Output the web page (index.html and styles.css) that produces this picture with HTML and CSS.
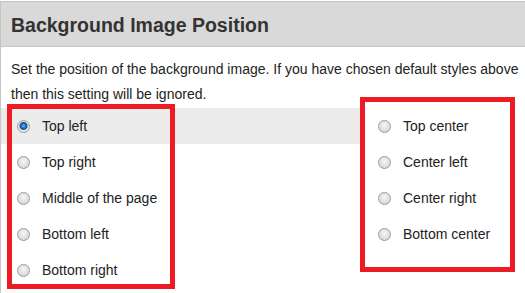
FILE: index.html
```html
<!DOCTYPE html>
<html lang="en">
<head>
  <meta charset="UTF-8" />
  <title>Background Image Position</title>
  <link rel="stylesheet" href="styles.css">
</head>
<body>
  <div class="panel">
    <div class="panel-head">
      <h2>Background Image Position</h2>
    </div>
    <p class="intro">Set the position of the background image. If you have chosen default styles above then this setting will be ignored.</p>

    <div class="options">
      <div class="col col-left">
        <label class="opt active"><input type="radio" name="bgpos" checked> Top left</label>
        <label class="opt"><input type="radio" name="bgpos"> Top right</label>
        <label class="opt"><input type="radio" name="bgpos"> Middle of the page</label>
        <label class="opt"><input type="radio" name="bgpos"> Bottom left</label>
        <label class="opt"><input type="radio" name="bgpos"> Bottom right</label>
      </div>
      <div class="col col-right">
        <label class="opt"><input type="radio" name="bgpos"> Top center</label>
        <label class="opt"><input type="radio" name="bgpos"> Center left</label>
        <label class="opt"><input type="radio" name="bgpos"> Center right</label>
        <label class="opt"><input type="radio" name="bgpos"> Bottom center</label>
      </div>
    </div>
  </div>

  <!-- annotation boxes -->
  <div class="mark mark-left"></div>
  <div class="mark mark-right"></div>
</body>
</html>
```

FILE: styles.css
```css
html, body {
  margin: 0;
  overflow: hidden;
}
body {
  font-family: 'Liberation Sans', Arial, sans-serif;
  color: #222;
  background: #fff;
  position: relative;
  height: 293px;
}
.panel {
  width: 620px;
  margin-top: 1px;
  border-top: 1px solid #c4c4c4;
  border-left: 1px solid #c4c4c4;
  height: 300px;
}
.panel-head {
  height: 44px;
  background: #d9d9d9;
  border-bottom: 1px solid #c6c6c6;
  display: flex;
  align-items: center;
  padding-left: 10px;
}
.panel-head h2 {
  margin: 0;
  font-size: 19.5px;
  font-weight: bold;
  color: #333;
  padding-top: 2px;
}
.intro {
  margin: 10px 0 0;
  padding: 0 10px;
  font-size: 14px;
  line-height: 25px;
  color: #222;
  width: 514px;
}
.options {
  display: flex;
  margin-top: 1px;
}
.col-left {
  width: 359px;
}
.col-right {
  padding-left: 18px;
}
.opt {
  display: flex;
  align-items: center;
  height: 36px;
  font-size: 14px;
  padding-left: 16px;
}
.col-right .opt {
  padding-left: 0;
}
.opt.active {
  background: #ececec;
}
.opt input {
  -webkit-appearance: none;
  appearance: none;
  width: 13px;
  height: 13px;
  margin: 0 12px 0 0;
  border-radius: 50%;
  border: 1px solid #9b9b9b;
  background: radial-gradient(circle at 50% 40%, #f6f6f6 0, #dedede 60%, #cfcfcf 100%);
  box-sizing: border-box;
}
.opt input:checked {
  background: radial-gradient(circle at 50% 45%, #6fb3f0 0, #2a74c9 2px, #174d95 3.5px, #e9e9e9 4.5px, #dcdcdc 100%);
}
.mark {
  position: absolute;
  border: 5px solid #ed1c24;
  box-sizing: border-box;
}
.mark-left {
  left: 7px;
  top: 104px;
  width: 168px;
  height: 185px;
}
.mark-right {
  left: 360px;
  top: 97px;
  width: 155px;
  height: 175px;
}
```
